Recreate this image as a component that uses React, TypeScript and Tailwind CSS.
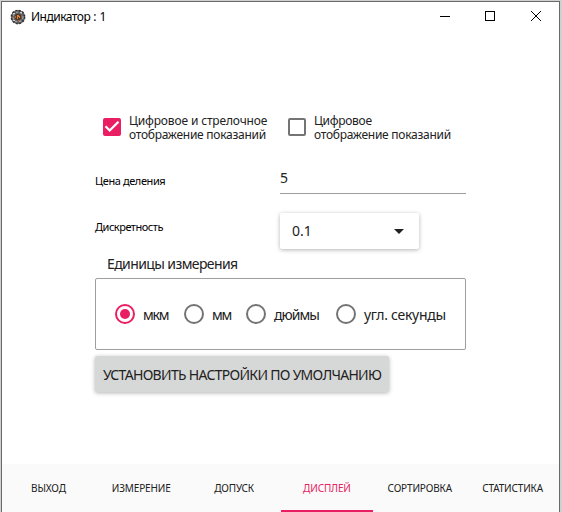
import React from 'react';

function AppIcon() {
  return (
    <svg className="h-4 w-4" viewBox="0 0 16 16">
      <circle cx="8" cy="8" r="7" fill="#65625f" />
      <circle cx="8" cy="8" r="6.5" fill="none" stroke="#33363a" strokeWidth="1.8" strokeDasharray="2 1.4" />
      <circle cx="8" cy="8" r="5" fill="none" stroke="#aaa9a7" strokeWidth="1.2" strokeDasharray="2.2 2" />
      <circle cx="8" cy="8" r="3.2" fill="#4a3b32" />
      <path d="M7 6h2v1h1v2H9V8H8v2H7z" fill="#ee7a25" />
      <path d="M8 11h2v1H8zM5 7h1v2H5z" fill="#b4602f" />
      <path d="M3 4h2v1H3zM10 3h2v1h-2zM3 11h2v1H3z" fill="#d0d0d0" />
    </svg>
  );
}

function Check({ on, lines, className }: { on?: boolean; lines: React.ReactNode; className: string }) {
  return (
    <label className={`flex items-start ${className}`}>
      <span className={`mt-1 flex h-[18px] w-[18px] shrink-0 rounded-[2px] ${on ? 'bg-[#e91e63]' : 'border-2 border-[#747474]'}`}>
        {on && (
          <svg className="h-[18px] w-[18px]" viewBox="0 0 18 18" fill="none" stroke="white" strokeWidth="2.3">
            <path d="M2.5 8.3 6.7 12.5 15.5 3.8" />
          </svg>
        )}
      </span>
      <span className="ml-2 flex flex-col whitespace-nowrap text-[12px] leading-[14px] text-[#212121]">{lines}</span>
    </label>
  );
}

function Radio({ on, label, width, spacing }: { on?: boolean; label: string; width: string; spacing: string }) {
  return (
    <label className={`flex items-center ${width}`}>
      <span className={`flex h-5 w-5 shrink-0 items-center justify-center rounded-full border-2 ${on ? 'border-[#e91e63]' : 'border-[#747474]'}`}>
        {on && <span className="h-[10px] w-[10px] rounded-full bg-[#e91e63]" />}
      </span>
      <span className={`ml-2 whitespace-nowrap pt-0.5 text-[14px] leading-5 ${spacing}`}>{label}</span>
    </label>
  );
}

const tabs = ['ВЫХОД', 'ИЗМЕРЕНИЕ', 'ДОПУСК', 'ДИСПЛЕЙ', 'СОРТИРОВКА', 'СТАТИСТИКА'];

export default function App() {
  return (
    <div className="h-[512px] w-[562px] overflow-hidden bg-[#d0d0d0] pl-px pt-px font-['Noto_Sans',sans-serif] text-[#212121]">
      <div className="flex h-[511px] w-[559px] flex-col border-x border-t border-[#696969] bg-white">
        <header className="flex h-[30px] shrink-0 items-center text-black">
          <span className="ml-2"><AppIcon /></span>
          <span className="ml-[5px] grow text-[12px] leading-4 tracking-[-0.5px]">Индикатор<span className="tracking-[-0.1px]"> : 1</span></span>
          <svg className="mr-[10px] h-[30px] w-[110px]" viewBox="0 0 110 30" fill="none" stroke="black" shapeRendering="crispEdges">
            <path d="M1 14.5h10M46.5 9.5h9v9h-9z" />
            <path d="m92 9 10 10M102 9 92 19" shapeRendering="auto" />
          </svg>
        </header>
        <main className="ml-[93px] flex w-[371px] grow flex-col">
          <div className="mt-[82px] flex h-7">
            <Check
              on
              className="ml-2 w-[185px]"
              lines={<><span className="tracking-[-0.15px]">Цифровое и стрелочное</span><span className="tracking-[-0.27px]">отображение показаний</span></>}
            />
            <Check
              className=""
              lines={<><span className="tracking-[-0.3px]">Цифровое</span><span className="tracking-[-0.27px]">отображение показаний</span></>}
            />
          </div>
          <div className="mt-[20px] flex h-[32px]">
            <span className="w-[185px] pt-[11px] text-[11px] leading-4 tracking-[-0.4px] text-black">Цена деления</span>
            <span className="flex h-[32px] grow items-start border-b border-[#9e9e9e] pt-[6px] text-[14px] leading-5">5</span>
          </div>
          <div className="mt-[19px] flex h-[36px]">
            <span className="w-[185px] pt-[6px] text-[11px] leading-4 tracking-[-0.48px] text-black">Дискретность</span>
            <div className="flex w-[139px] items-center justify-between rounded-[2px] bg-white pl-3 pr-[15px] text-[14px] leading-5 shadow-[0_1px_4px_rgba(0,0,0,0.3)]">
              <span>0.1</span>
              <svg className="h-[5px] w-[10px]" viewBox="0 0 10 5"><path d="M0 0h10L5 5z" fill="#212121" /></svg>
            </div>
          </div>
          <div className="ml-3 mt-[5px] h-[24px] text-[14px] leading-5 tracking-[-0.6px]">Единицы измерения</div>
          <div className="flex h-[72px] items-center rounded-[2px] border border-[#9e9e9e] pl-[19px]">
            <Radio on label="мкм" width="w-[69px]" spacing="tracking-[-1.2px]" />
            <Radio label="мм" width="w-[62px]" spacing="tracking-[-1.2px]" />
            <Radio label="дюймы" width="w-[90px]" spacing="tracking-[-0.95px]" />
            <Radio label="угл. секунды" width="" spacing="tracking-[-0.28px]" />
          </div>
          <button className="mt-[6px] flex h-[36px] w-[294px] items-center whitespace-nowrap rounded-[2px] bg-[#d6d7d7] pl-2 pt-px text-[14px] leading-5 tracking-[-0.7px] shadow-[0_1px_4px_rgba(0,0,0,0.3)]">
            УСТАНОВИТЬ НАСТРОЙКИ ПО УМОЛЧАНИЮ
          </button>
        </main>
        <nav className="grid h-[48px] shrink-0 grid-cols-6 bg-[#fafafa] text-[10px] leading-4 tracking-[-0.15px]">
          {tabs.map((tab, i) => (
            <div key={tab} className={`flex items-center justify-center border-b-2 pt-[2px] ${i === 3 ? 'border-[#e91e63] text-[#e91e63]' : 'border-transparent'}`}>
              {tab}
            </div>
          ))}
        </nav>
      </div>
    </div>
  );
}
